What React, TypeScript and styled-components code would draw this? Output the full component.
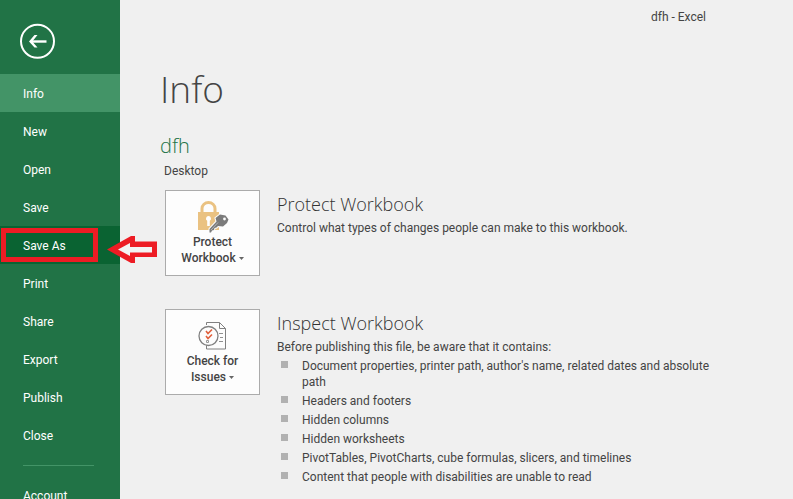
import React from "react";
import styled, { createGlobalStyle } from "styled-components";

const GlobalStyle = createGlobalStyle`
  * { box-sizing: border-box; }
  body {
    margin: 0;
    overflow: hidden;
    background: #f0f0f0;
    color: #444444;
    font: 12px/16px Roboto, "Open Sans", sans-serif;
  }
  button { font: inherit; color: inherit; }
  h1, h2, h3, p, ul { margin: 0; padding: 0; font-weight: 400; }
  h1, h2, h3 { font-family: "Open Sans", "Noto Sans", sans-serif; }
`;

const Page = styled.div`
  display: flex;
  height: 100vh;
  overflow: hidden;
`;

const Sidebar = styled.nav`
  flex: none;
  width: 120px;
  padding-top: 23px;
  background: #217346;
  color: #ffffff;
`;

const BackButton = styled.button`
  display: block;
  width: 36px;
  height: 36px;
  margin: 0 0 15px 19px;
  padding: 0;
  border: 0;
  background: none;
`;

const NavItem = styled.button<{ $tone?: "current" | "hover" }>`
  position: relative;
  display: block;
  width: 100%;
  height: 38px;
  padding: 1px 0 0 23px;
  border: 0;
  text-align: left;
  background: ${({ $tone }) =>
    $tone === "current" ? "#439467" : $tone === "hover" ? "#0a6332" : "transparent"};
`;

const Divider = styled.hr`
  width: 71px;
  height: 1px;
  margin: 11px 0 10px 23px;
  border: 0;
  background: #439467;
`;

const Highlight = styled.span`
  position: absolute;
  top: 2px;
  left: 1px;
  width: 97px;
  height: 34px;
  border: 5px solid #ed1c24;
`;

const Pointer = styled.svg`
  position: absolute;
  z-index: 1;
  top: 10px;
  left: 107px;
`;

const Main = styled.main`
  flex: 1;
  min-width: 0;
  padding: 9px 80px 0 40px;
`;

const WindowTitle = styled.p`
  padding-right: 7px;
  text-align: right;
`;

const Title = styled.h1`
  margin-top: 36px;
  font-size: 37px;
  line-height: 56px;
  font-weight: 300;
`;

const FileName = styled.h2`
  margin-top: 15px;
  color: #217346;
  font-size: 20px;
  line-height: 28px;
  font-weight: 350;
`;

const Location = styled.p`
  margin: 3px 0 11px 4px;
`;

const Section = styled.section`
  display: flex;
  gap: 17px;
  margin: 0 0 33px 5px;
`;

const Tile = styled.button`
  display: flex;
  flex: none;
  flex-direction: column;
  align-items: center;
  width: 95px;
  height: 86px;
  padding: 10px 0 0;
  border: 1px solid #ababab;
  background: #fdfdfd;
  font-weight: 500;
`;

const TileLabel = styled.span`
  margin-top: 1px;
`;

const Caret = styled.svg`
  margin-left: 3px;
  vertical-align: 2px;
`;

const SectionTitle = styled.h3`
  margin-bottom: 2px;
  font-size: 18px;
  line-height: 28px;
  font-weight: 350;
  color: #333333;
`;

const Bullets = styled.ul`
  display: grid;
  gap: 3px;
  margin-top: 3px;
  list-style: none;
`;

const Bullet = styled.li`
  display: flex;
  gap: 14px;
  padding-left: 4px;

  &::before {
    content: "";
    flex: none;
    width: 7px;
    height: 7px;
    margin-top: 3px;
    background: #b1b1b1;
  }
`;

const contents = [
  "Document properties, printer path, author's name, related dates and absolute path",
  "Headers and footers",
  "Hidden columns",
  "Hidden worksheets",
  "PivotTables, PivotCharts, cube formulas, slicers, and timelines",
  "Content that people with disabilities are unable to read",
];

const DropCaret = () => (
  <Caret width="5" height="3" viewBox="0 0 5 3" aria-hidden="true">
    <path d="M0 0h5L2.5 3z" fill="#666" />
  </Caret>
);

const LockIcon = () => (
  <svg width="32" height="32" viewBox="0 0 32 32" aria-hidden="true">
    <path d="M5 12V7.500a6.500 6 0 0 1 13 0V12" fill="none" stroke="#eac282" strokeWidth="3" />
    <path d="M1 11h21v18H1z" fill="#eac282" />
    <path d="M11.500 15a2.600 2.600 0 0 1 1.300 4.800V25h-2.600v-5.200a2.600 2.600 0 0 1 1.300-4.800z" fill="#fff" />
    <path
      d="M18.500 17l4.500-3.500 5.500 1 3 4-1.500 3.500-4 3.500-5-.5-1.500 1.500-2 .5-.5 2-2 .5-1 2H12.500V28l7-7.500z"
      fill="#7b7b7b"
      stroke="#fdfdfd"
      strokeWidth="2"
      paintOrder="stroke"
    />
    <circle cx="27.500" cy="18" r="1.400" fill="#fdfdfd" />
    <path d="M14 29l7-7.500" stroke="#b5b5b5" strokeWidth="1" />
  </svg>
);

const InspectIcon = () => (
  <svg width="30" height="32" viewBox="0 0 30 32" fill="none" aria-hidden="true">
    <path d="M8.500 5V2.500h13l6 6v20.500h-19V25" stroke="#808080" fill="#fdfdfd" />
    <path d="M21.500 2.500v6h6" stroke="#808080" />
    <path d="M21 13.500h4M22 17.500h3M21 21.500h4" stroke="#909090" />
    <circle cx="10.500" cy="16" r="9.500" fill="#fdfdfd" stroke="#808080" strokeWidth="1.300" />
    <path d="M8 11l2 2.500 4-4M8 16l2 2.500 4-4" stroke="#e0603c" strokeWidth="1.600" />
    <path d="M8.500 20.500h2v2h-2z" stroke="#999" />
  </svg>
);

export default function App() {
  return (
    <>
      <GlobalStyle />
      <Page>
        <Sidebar aria-label="File menu">
          <BackButton aria-label="Back">
            <svg width="36" height="36" viewBox="0 0 36 36" fill="none" stroke="#fff" aria-hidden="true">
              <circle cx="18.500" cy="18.300" r="16.500" strokeWidth="2" />
              <path d="M27.500 18.500H12" strokeWidth="2.400" />
              <path d="M18.500 12h-3L10 18.500l5.500 6h3l-5.200-6z" fill="#fff" stroke="none" />
            </svg>
          </BackButton>
          <NavItem $tone="current" aria-current="page">Info</NavItem>
          <NavItem>New</NavItem>
          <NavItem>Open</NavItem>
          <NavItem>Save</NavItem>
          <NavItem $tone="hover">
            Save As
            <Highlight />
            <Pointer width="50" height="27" viewBox="0 0 50 27" aria-hidden="true">
              <path d="M0 13.500L24 0h4v5.500h22V21H28v6h-4z" fill="#ed1c24" />
              <path d="M11 13.500L23 7v4h22v5.500H23V20z" fill="#f3f3f3" />
            </Pointer>
          </NavItem>
          <NavItem>Print</NavItem>
          <NavItem>Share</NavItem>
          <NavItem>Export</NavItem>
          <NavItem>Publish</NavItem>
          <NavItem>Close</NavItem>
          <Divider />
          <NavItem>Account</NavItem>
        </Sidebar>
        <Main>
          <WindowTitle>dfh - Excel</WindowTitle>
          <Title>Info</Title>
          <FileName>dfh</FileName>
          <Location>Desktop</Location>
          <Section>
            <Tile>
              <LockIcon />
              <TileLabel>
                Protect
                <br />
                Workbook
                <DropCaret />
              </TileLabel>
            </Tile>
            <div>
              <SectionTitle>Protect Workbook</SectionTitle>
              <p>Control what types of changes people can make to this workbook.</p>
            </div>
          </Section>
          <Section>
            <Tile>
              <InspectIcon />
              <TileLabel>
                Check for
                <br />
                Issues
                <DropCaret />
              </TileLabel>
            </Tile>
            <div>
              <SectionTitle>Inspect Workbook</SectionTitle>
              <p>Before publishing this file, be aware that it contains:</p>
              <Bullets>
                {contents.map((text) => (
                  <Bullet key={text}>{text}</Bullet>
                ))}
              </Bullets>
            </div>
          </Section>
        </Main>
      </Page>
    </>
  );
}
